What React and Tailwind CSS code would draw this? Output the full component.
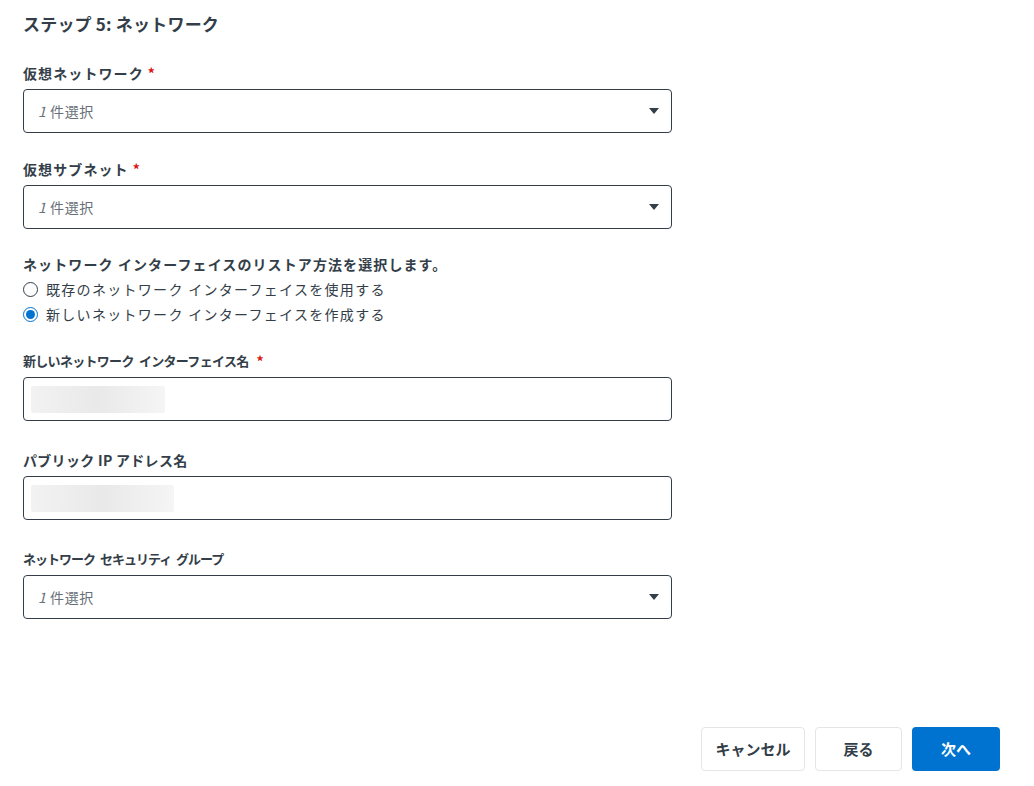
import React from "react";

const font = { fontFamily: '"Noto Sans CJK JP", "Noto Sans", sans-serif' };

function Label({ children, required, track = "tracking-[1.1px]", size = "text-[14px]", gap = "ml-[4px]" }) {
  return (
    <div className="h-5 flex items-center text-[14px] font-bold text-[#333e48] leading-5">
      <span className={`${track} ${size}`}>{children}</span>
      {required && <span className={`${gap} text-[#d91515]`}>*</span>}
    </div>
  );
}

function Select() {
  return (
    <div className="mt-[6px] w-[649px] h-[44px] border border-[#333e48] rounded-[4px] flex items-center justify-between pl-[14px] pr-[12px]">
      <span className="text-[14px] text-[#687078] tracking-[0.6px]"><i>1</i>&nbsp;件選択</span>
      <svg width="10" height="6" viewBox="0 0 10 6"><path d="M0 0 L10 0 L5 6 Z" fill="#333e48" /></svg>
    </div>
  );
}

function Input({ w }) {
  return (
    <div className="mt-[6px] w-[649px] h-[44px] border border-[#333e48] rounded-[4px] flex items-center pl-[7px]">
      <div className={`${w} h-[27px] bg-gradient-to-r from-[#f2f2f2] via-[#e9e9e9] to-[#f5f5f5] rounded-[2px] blur-[0.5px]`} />
    </div>
  );
}

function Radio({ checked, children }) {
  return (
    <div className="h-[25px] flex items-center gap-[8px] text-[14px] text-[#333e48]">
      {checked ? (
        <span className="w-[15px] h-[15px] rounded-full border border-[#0073d1] flex items-center justify-center">
          <span className="w-[9px] h-[9px] rounded-full bg-[#0073d1]" />
        </span>
      ) : (
        <span className="w-[15px] h-[15px] rounded-full border border-[#333e48]" />
      )}
      <span className="tracking-[1.3px]">{children}</span>
    </div>
  );
}

export default function App() {
  return (
    <div style={font} className="w-[1034px] h-[786px] bg-white relative px-[23px] pt-[12px]">
      <div className="h-6 text-[17px] font-bold text-[#333e48] leading-6 tracking-[0.2px]">ステップ 5: ネットワーク</div>
      <div className="mt-[27px]">
        <Label required>仮想ネットワーク</Label>
        <Select />
      </div>
      <div className="mt-[26px]">
        <Label required>仮想サブネット</Label>
        <Select />
      </div>
      <div className="mt-[25px]">
        <Label>ネットワーク インターフェイスのリストア方法を選択します。</Label>
        <div className="mt-[3px]">
          <Radio>既存のネットワーク インターフェイスを使用する</Radio>
          <Radio checked>新しいネットワーク インターフェイスを作成する</Radio>
        </div>
      </div>
      <div className="mt-[24px]">
        <Label required size="text-[13px]" gap="ml-[8px]" track="tracking-[-0.7px] [word-spacing:3px]">新しいネットワーク インターフェイス名</Label>
        <Input w="w-[134px]" />
      </div>
      <div className="mt-[29px]">
        <Label track="tracking-[0.3px]">パブリック IP アドレス名</Label>
        <Input w="w-[143px]" />
      </div>
      <div className="mt-[29px]">
        <Label size="text-[13px]" track="tracking-[-1px] [word-spacing:3px]">ネットワーク セキュリティ グループ</Label>
        <Select />
      </div>
      <div className="absolute left-0 right-[34px] top-[727px] flex justify-end gap-[10px]">
        <button className="w-[104px] h-[44px] border border-[#e3e5e8] rounded-[4px] bg-white text-[15px] font-bold text-[#333e48]">キャンセル</button>
        <button className="w-[87px] h-[44px] border border-[#e3e5e8] rounded-[4px] bg-white text-[15px] font-bold text-[#333e48]">戻る</button>
        <button className="w-[88px] h-[44px] rounded-[4px] bg-[#0073d1] text-[15px] font-bold text-white">次へ</button>
      </div>
    </div>
  );
}
